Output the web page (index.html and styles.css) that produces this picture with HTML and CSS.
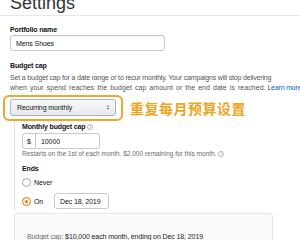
FILE: index.html
```html
<!DOCTYPE html>
<html>
<head>
<meta charset="utf-8">
<link rel="stylesheet" href="styles.css">
</head>
<body>
<div class="page">
  <header class="header">
    <h1 class="title">Settings</h1>
  </header>
  <main class="content">
    <div class="label">Portfolio name</div>
    <div class="input name-input">Mens Shoes</div>
    <div class="label section-label">Budget cap</div>
    <p class="desc">Set a budget cap for a date range or to recur monthly. Your campaigns will stop delivering<br><span class="desc-l2">when your spend reaches the budget cap amount or the end date is reached.</span> <a class="link">Learn more</a></p>
    <div class="select-row">
      <div class="highlight">
        <div class="select"><span class="select-text">Recurring monthly</span><span class="arrows"><i class="up"></i><i class="down"></i></span></div>
      </div>
      <div class="cn">重复每月预算设置</div>
    </div>
    <div class="sub">
      <div class="label">Monthly budget cap <span class="info">i</span></div>
      <div class="input money"><span class="cur">$</span><span class="amt">10000</span></div>
      <div class="hint">Restarts on the 1st of each month. $2,000 remaining for this month. <span class="info">i</span></div>
      <div class="label ends">Ends</div>
      <div class="radio-row never-row"><span class="radio"></span><span>Never</span></div>
      <div class="radio-row on-row"><span class="radio checked"></span><span class="on-label">On</span><div class="input date">Dec 18, 2019</div></div>
    </div>
    <div class="summary"><span class="muted">Budget cap:</span> $10,000 each month, ending on Dec 18, 2019</div>
  </main>
</div>
</body>
</html>
```
FILE: styles.css
```css
* { box-sizing: border-box; }
html, body { margin: 0; padding: 0; background: #fff; }
body { font-family: "Liberation Sans", Arial, sans-serif; color: #111; width: 300px; height: 240px; overflow: hidden; }
.page { width: 300px; height: 240px; overflow: hidden; }
.header { border-bottom: 1px solid #e7e7e7; height: 16px; padding-left: 10px; overflow: hidden; }
.title { margin: -6px 0 0; font-size: 18px; font-weight: normal; color: #333; line-height: 18px; }
.content { padding: 9px 0 0 10px; }
.label { font-size: 7px; font-weight: bold; line-height: 10px; color: #111; letter-spacing: -0.15px; }
.input { border: 1px solid #c9c9c9; border-radius: 3px; background: #fff; font-size: 7px; color: #111; display: flex; align-items: center; letter-spacing: -0.1px; }
.name-input { width: 155px; height: 16px; padding-left: 5px; box-shadow: inset 0 1px 1px rgba(0,0,0,.07); }
.section-label { margin-top: 10px; }
.desc { margin: 2px 0 0; font-size: 7px; line-height: 10px; color: #555; width: 290px; letter-spacing: -0.17px; white-space: nowrap; }
.desc-l2 { letter-spacing: 0.05px; word-spacing: 1px; }
.link { color: #0066c0; }
.select-row { display: grid; grid-template-columns: 120px max-content; column-gap: 7px; align-items: center; margin: 2px 0 0 -7px; }
.highlight { width: 120px; padding: 2px 5px 3px; border: 2px solid #f0a630; border-radius: 6px; }
.select { width: 106px; height: 17px; border: 1px solid #adb1b8; border-radius: 3px; background: linear-gradient(#f7f8fa, #e7e9ec); display: flex; align-items: center; padding: 0 6px; font-size: 7px; color: #111; letter-spacing: -0.1px; }
.select-text { flex: 1; }
.arrows { flex: none; display: flex; flex-direction: column; gap: 1px; }
.arrows i { display: block; width: 0; height: 0; border-left: 1.5px solid transparent; border-right: 1.5px solid transparent; }
.arrows .up { border-bottom: 2px solid #666; }
.arrows .down { border-top: 2px solid #666; }
.cn { font-family: "Noto Sans CJK SC", sans-serif; font-weight: bold; font-size: 14px; line-height: 18px; color: #f0a41e; letter-spacing: 0.5px; }
.sub { margin-left: 4px; border-left: 1px solid #e3e3e3; padding: 1px 0 2px 7px; }
.info { display: inline-block; width: 6px; height: 6px; border: 1px solid #b5b5b5; border-radius: 50%; font-size: 4px; line-height: 4px; text-align: center; color: #999; vertical-align: middle; font-weight: bold; letter-spacing: 0; }
.money { width: 78px; height: 16px; margin-top: 1px; }
.cur { width: 13px; border-right: 1px solid #c9c9c9; height: 100%; display: flex; align-items: center; justify-content: center; }
.amt { padding-left: 5px; }
.hint { font-size: 6.5px; color: #6c6c6c; line-height: 9px; letter-spacing: 0; }
.ends { margin-top: 6px; }
.radio-row { display: flex; align-items: center; font-size: 7px; color: #111; gap: 3px; letter-spacing: -0.1px; }
.never-row { margin-top: 3px; height: 10px; }
.radio { flex: none; width: 9px; height: 9px; border: 1px solid #a6a6a6; border-radius: 50%; background: #fff; display: flex; align-items: center; justify-content: center; }
.radio.checked { border-color: #e77600; background: #fff6ec; }
.radio.checked::after { content: ""; width: 3px; height: 3px; border-radius: 50%; background: #e77600; }
.on-row { margin-top: 6px; height: 16px; }
.on-label { width: 17px; }
.date { width: 55px; height: 16px; padding-left: 5px; }
.summary { margin: 2px 0 0 4px; width: 259px; height: 40px; border: 1px solid #e7e7e7; border-radius: 3px; background: #fafafa; font-size: 7px; line-height: 10px; padding: 18px 0 0 12px; color: #222; letter-spacing: -0.1px; }
.muted { color: #6c6c6c; }
```
